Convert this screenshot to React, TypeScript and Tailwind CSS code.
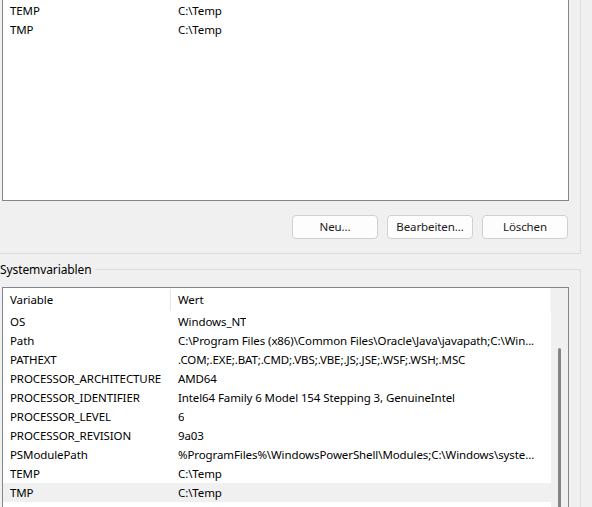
const USER_VARS = [
  { name: 'TEMP', value: 'C:\\Temp' },
  { name: 'TMP', value: 'C:\\Temp' },
]

const SYSTEM_VARS = [
  { name: 'OS', value: 'Windows_NT' },
  { name: 'Path', value: 'C:\\Program Files (x86)\\Common Files\\Oracle\\Java\\javapath;C:\\Win...' },
  { name: 'PATHEXT', value: '.COM;.EXE;.BAT;.CMD;.VBS;.VBE;.JS;.JSE;.WSF;.WSH;.MSC' },
  { name: 'PROCESSOR_ARCHITECTURE', value: 'AMD64' },
  { name: 'PROCESSOR_IDENTIFIER', value: 'Intel64 Family 6 Model 154 Stepping 3, GenuineIntel' },
  { name: 'PROCESSOR_LEVEL', value: '6' },
  { name: 'PROCESSOR_REVISION', value: '9a03' },
  { name: 'PSModulePath', value: '%ProgramFiles%\\WindowsPowerShell\\Modules;C:\\Windows\\syste...' },
  { name: 'TEMP', value: 'C:\\Temp' },
  { name: 'TMP', value: 'C:\\Temp' },
]

function Row({ name, value, selected }: { name: string; value: string; selected?: boolean }) {
  return (
    <div className={`flex h-[19px] items-center whitespace-nowrap ${selected ? 'bg-[#f0f0f0]' : ''}`}>
      <div className="w-[168px] shrink-0 pl-[7px]">{name}</div>
      <div className="pl-[7px] min-w-0 overflow-hidden">{value}</div>
    </div>
  )
}

function WinButton({ label }: { label: string }) {
  return (
    <button className="w-[86px] h-[24px] rounded-[4px] border border-[#d0d0d0] bg-[#fdfdfd] text-[#1a1a1a] leading-none">
      {label}
    </button>
  )
}

export default function App() {
  return (
    <div className="w-[592px] h-[507px] overflow-hidden bg-[#f0f0f0] text-[11.5px] tracking-[-0.1px] text-black font-['Segoe_UI','Noto_Sans',sans-serif]">

      {/* Benutzervariablen (scrolled, top cut off) */}
      <div className="w-[581px] h-[254px] border-r border-b border-[#dcdcdc] pl-[2px]">
        <div className="w-[567px] h-[201px] border-l border-r border-b border-[#82878f] bg-white pt-[1px]">
          {USER_VARS.map((v) => (
            <Row key={v.name} name={v.name} value={v.value} />
          ))}
        </div>
        <div className="flex justify-end gap-[9px] w-[567px] pr-[1px] mt-[14px]">
          <WinButton label="Neu..." />
          <WinButton label="Bearbeiten..." />
          <WinButton label="Löschen" />
        </div>
      </div>

      {/* Systemvariablen */}
      <fieldset className="w-[581px] min-w-0 mt-[7px] border-t border-r border-l-0 border-b-0 border-[#dcdcdc] h-[300px]">
        <legend className="pr-[3px] leading-[17px] text-[12px]">Systemvariablen</legend>
        <div className="w-[567px] ml-[2px] mt-[9px] h-[260px] border-l border-r border-t border-[#82878f] bg-white flex">
          <div className="flex-1 min-w-0 overflow-hidden">
            <div className="flex h-[24px] items-center border-r border-[#f4f4f4]">
              <div className="w-[168px] h-[22px] shrink-0 pl-[7px] flex items-center border-r border-[#e5e5e5]">Variable</div>
              <div className="pl-[7px]">Wert</div>
            </div>
            {SYSTEM_VARS.map((v, i) => (
              <Row key={v.name + i} name={v.name} value={v.value} selected={i === SYSTEM_VARS.length - 1} />
            ))}
          </div>
          <div className="w-[17px] shrink-0 bg-[#f0f0f0] pt-[60px] flex justify-center">
            <div className="w-[3px] h-[220px] rounded-full bg-[#858585]" />
          </div>
        </div>
      </fieldset>
    </div>
  )
}
